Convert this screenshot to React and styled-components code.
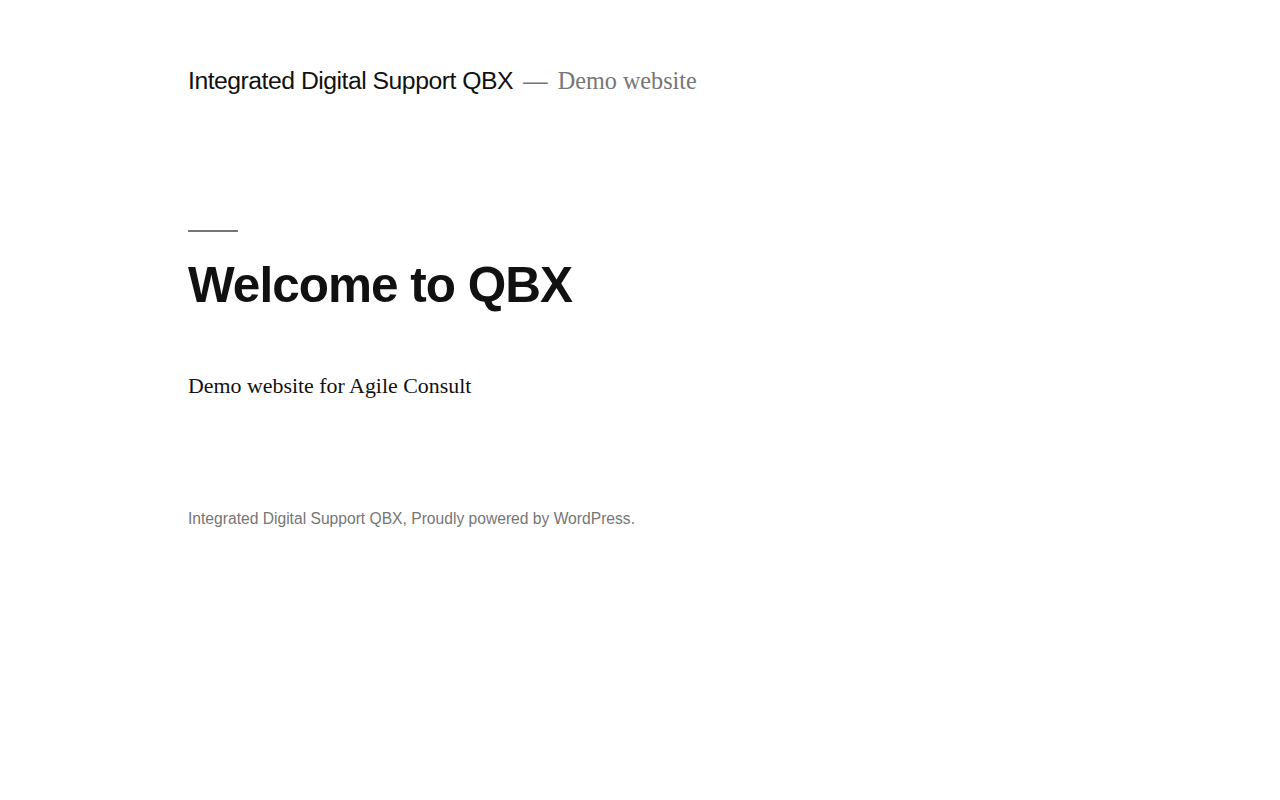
import React from "react";
import styled, { createGlobalStyle } from "styled-components";

const GlobalStyle = createGlobalStyle`
  html, body {
    margin: 0;
    padding: 0;
    background: #fff;
  }
  body {
    font-family: "Liberation Serif", "Times New Roman", serif;
    font-size: 22px;
    color: #111;
  }
`;

const Page = styled.div`
  padding: 0 calc(10% + 60px);
  min-height: 800px;
  box-sizing: border-box;
`;

const SiteHeader = styled.header`
  padding-top: 66px;
`;

const Branding = styled.div`
  display: flex;
  align-items: baseline;
`;

const SiteTitle = styled.p`
  margin: 0;
  font-family: "Liberation Sans", Arial, sans-serif;
  font-size: 24.75px;
  line-height: 1.2;
  letter-spacing: -0.02em;
  color: #111;
`;

const SiteDescription = styled.p`
  margin: 0;
  font-family: "Liberation Serif", "Times New Roman", serif;
  font-size: 24.2px;
  line-height: 1.2;
  color: #767676;

  &::before {
    content: "\\2014";
    font-family: "Liberation Sans", Arial, sans-serif;
    font-size: 24.75px;
    margin: 0 10px 0 10px;
  }
`;

const Article = styled.article`
  margin-top: 134px;
`;

const Divider = styled.div`
  width: 50px;
  height: 2px;
  background: #767676;
`;

const EntryTitle = styled.h1`
  margin: 23px 0 0;
  font-family: "Liberation Sans", Arial, sans-serif;
  font-weight: 700;
  font-size: 49.5px;
  line-height: 1.2;
  letter-spacing: -0.02em;
  color: #111;
`;

const EntryContent = styled.p`
  margin: 52px 0 0;
  font-size: 21.9px;
  line-height: 1.8;
  color: #111;
`;

const SiteFooter = styled.footer`
  margin-top: 104px;
  font-family: "Liberation Sans", Arial, sans-serif;
  font-size: 15.64px;
  line-height: 1.2;
  color: #767676;
`;

const FooterLink = styled.a`
  color: inherit;
  text-decoration: none;
`;

export default function App() {
  return (
    <>
      <GlobalStyle />
      <Page>
        <SiteHeader>
          <Branding>
            <SiteTitle>Integrated Digital Support QBX</SiteTitle>
            <SiteDescription>Demo website</SiteDescription>
          </Branding>
        </SiteHeader>

        <main>
          <Article>
            <Divider />
            <EntryTitle>Welcome to QBX</EntryTitle>
            <EntryContent>Demo website for Agile Consult</EntryContent>
          </Article>
        </main>

        <SiteFooter>
          <FooterLink href="#">Integrated Digital Support QBX</FooterLink>,{" "}
          <FooterLink href="#">Proudly powered by WordPress</FooterLink>.
        </SiteFooter>
      </Page>
    </>
  );
}
